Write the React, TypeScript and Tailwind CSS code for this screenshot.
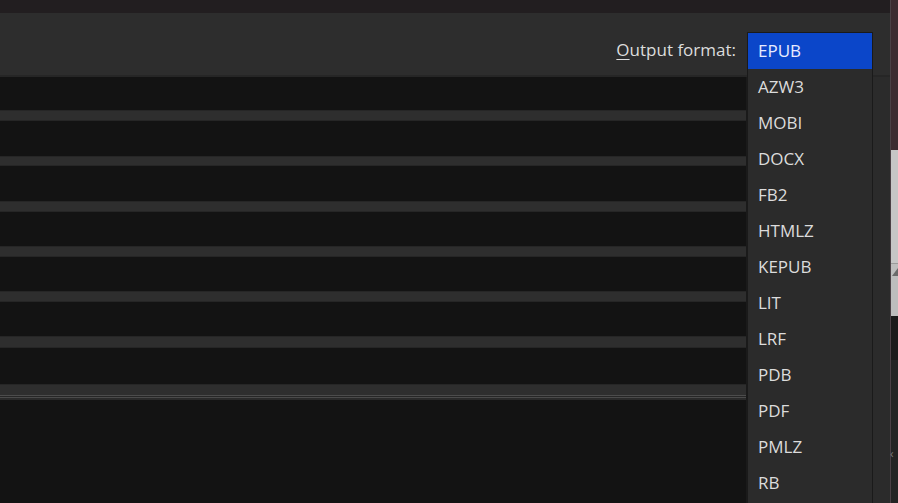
import React from "react";

const rows = [
  "h-[33px] bg-[#131313]",
  "h-[11px] bg-[#2e2e2e] border-y border-[#262626]",
  "h-[35px] bg-[#131313]",
  "h-[10px] bg-[#2e2e2e] border-y border-[#262626]",
  "h-[35px] bg-[#131313]",
  "h-[11px] bg-[#2e2e2e] border-y border-[#262626]",
  "h-[34px] bg-[#131313]",
  "h-[11px] bg-[#2e2e2e] border-y border-[#262626]",
  "h-[34px] bg-[#131313]",
  "h-[11px] bg-[#2e2e2e] border-y border-[#262626]",
  "h-[34px] bg-[#131313]",
  "h-[12px] bg-[#2e2e2e] border-y border-[#262626]",
  "h-[36px] bg-[#131313]",
  "h-[11px] bg-[#2e2e2e] border-t border-[#262626]",
  "h-[1px] bg-[#4c4c4c]",
  "h-[1px] bg-[#262626]",
  "h-[1px] bg-[#4a4a4a]",
  "h-[2px] bg-[#2a2a2a]",
];

const formats = [
  "EPUB", "AZW3", "MOBI", "DOCX", "FB2", "HTMLZ", "KEPUB", "LIT", "LRF",
  "PDB", "PDF", "PMLZ", "RB",
];

export default function App() {
  return (
    <div
      className="relative flex w-[898px] h-[503px] overflow-hidden bg-[#131313] text-[#dcdcdc]"
      style={{ fontFamily: '"Open Sans", "Noto Sans", sans-serif' }}
    >
      <div className="flex flex-col w-[890px] h-full">
        <div className="h-[13px] bg-[#221e20] shrink-0" />
        <div className="h-[64px] shrink-0 bg-[#2d2d2d] border-b-2 border-[#262626] flex items-start justify-end pr-[154px] pt-[25px]">
          <span className="text-[17px] leading-[24px]">
            <span className="underline underline-offset-[3px]">O</span>utput format:
          </span>
        </div>
        <div className="flex flex-1 min-h-0">
          <div className="w-[746px] flex flex-col">
            {rows.map((c, i) => (
              <div key={i} className={"shrink-0 " + c} />
            ))}
            <div className="flex-1 bg-[#131313]" />
          </div>
          <div className="w-[1px] bg-[#1a1a1a]" />
          <div className="flex-1 bg-[#2b2b2b]" />
        </div>
      </div>
      <div className="w-[8px] h-full flex flex-col border-l border-[#4a4045]">
        <div className="h-[150px] bg-[#3b2b30]" />
        <div className="h-[113px] bg-[#c6c6c6]" />
        <div className="h-[53px] bg-[#bdbdbd] border-t border-[#9a9a9a] relative">
          <div className="absolute left-[1px] top-[4px] w-0 h-0 border-l-[6px] border-l-transparent border-b-[8px] border-b-[#6a6a6a]" />
        </div>
        <div className="h-[44px] bg-[#1b1b1b]" />
        <div className="flex-1 bg-[#242424] relative">
          <span className="absolute left-[-1px] top-[88px] text-[12px] leading-[12px] text-[#777]">‹</span>
        </div>
      </div>

      <div className="absolute left-[747px] top-[32px] w-[126px] h-[480px] bg-[#2b2b2b] border border-[#1a1a1a] overflow-hidden">
        {formats.map((f, i) => (
          <div
            key={f}
            className={
              "h-[36px] pl-[10px] flex items-center text-[17px] " +
              (i === 0 ? "bg-[#0b46c9] text-[#e8ecff]" : "text-[#dcdcdc]")
            }
          >
            {f}
          </div>
        ))}
      </div>
    </div>
  );
}
